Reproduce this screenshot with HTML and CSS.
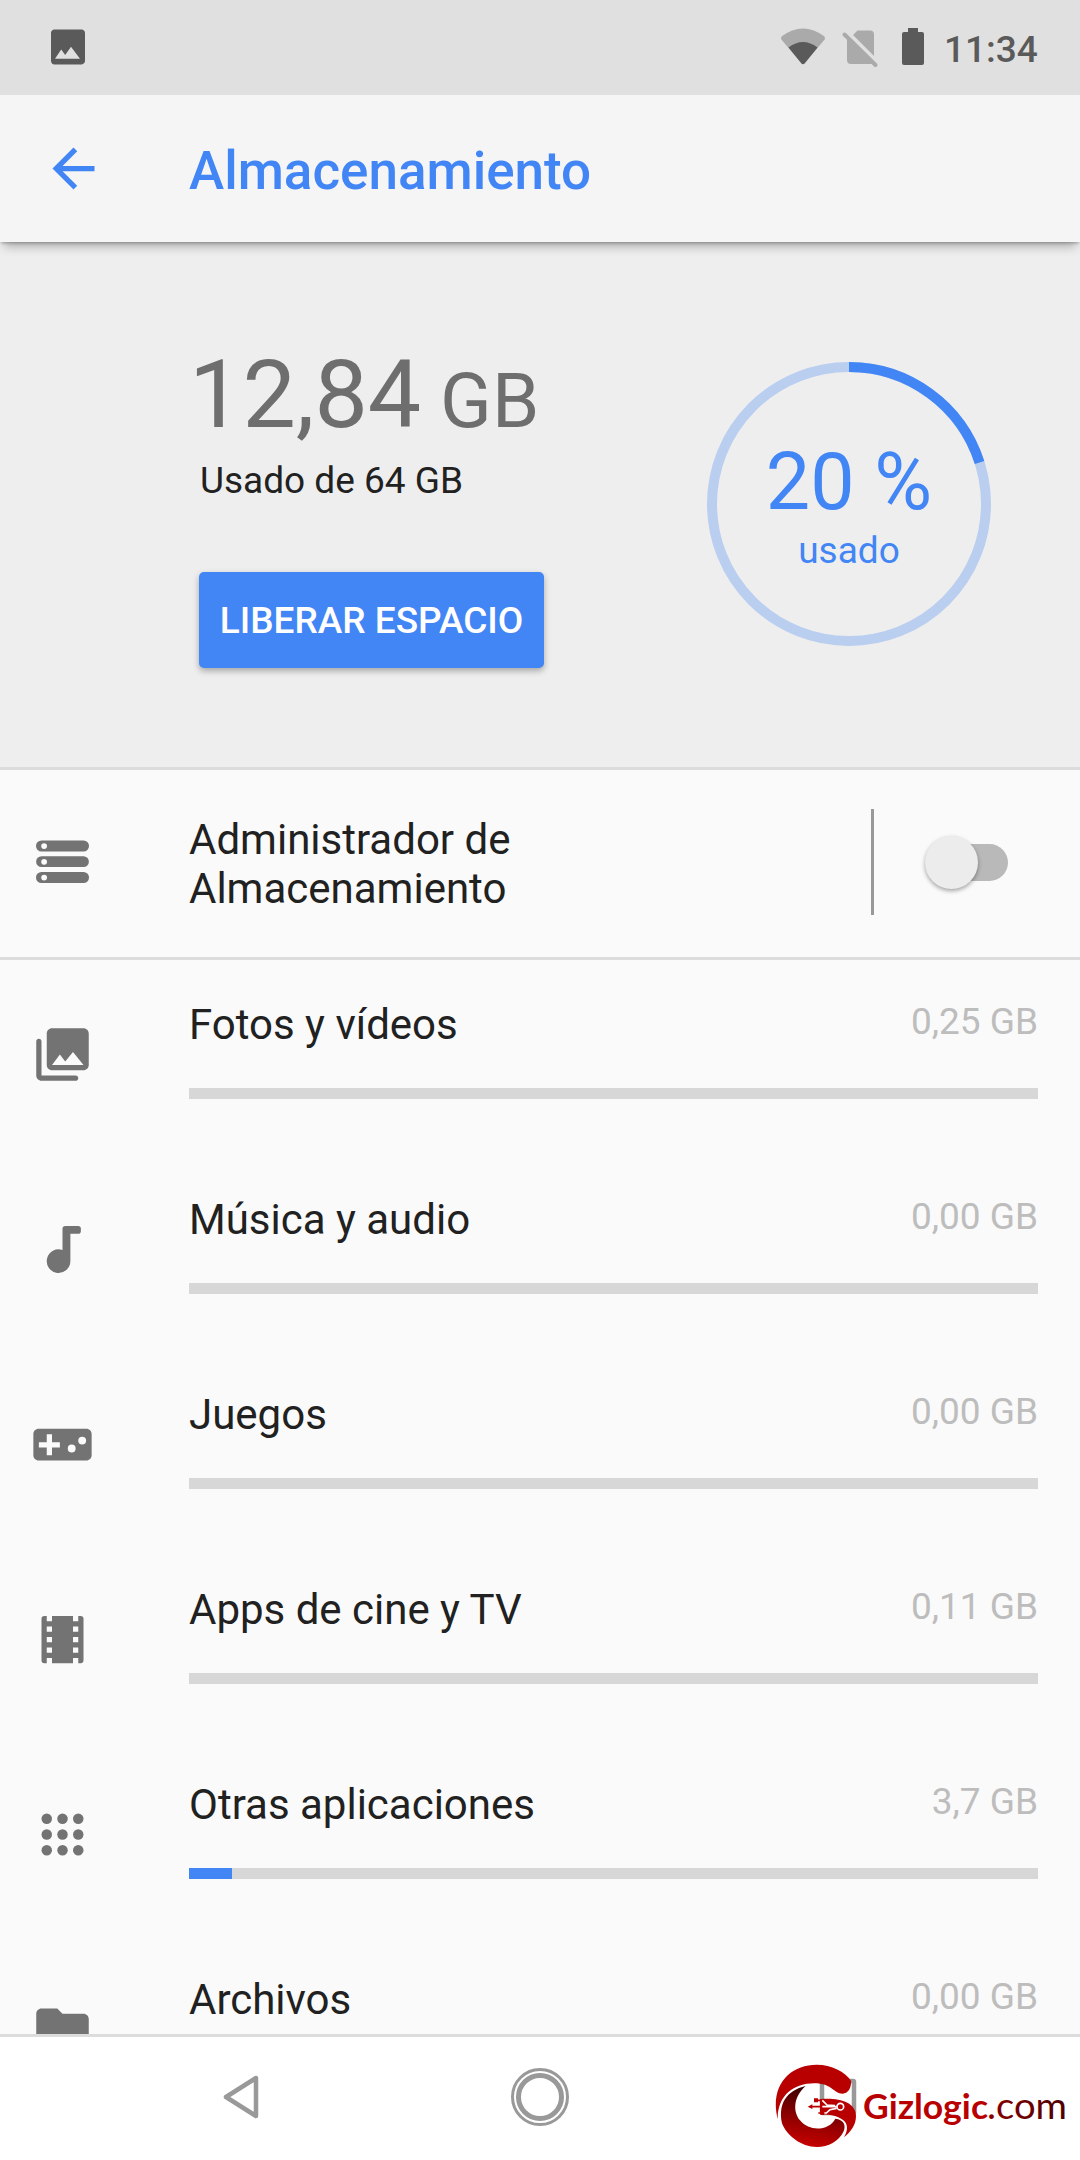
FILE: index.html
```html
<!DOCTYPE html>
<html lang="es">
<head>
<meta charset="utf-8">
<title>Almacenamiento</title>
<link rel="stylesheet" href="styles.css">
</head>
<body>
<div class="screen">
  <header class="status">
    <svg class="status-pic" width="48" height="48" viewBox="0 0 24 24"><path d="M20.500 19V5c0-1-.8-1.700-1.700-1.700H5.200C4.300 3.300 3.500 4 3.500 5v14c0 1 .8 1.700 1.700 1.700h13.600c.9 0 1.700-.8 1.700-1.700zM8.600 13.300l2 2.700 2.900-4.100 4.500 6H5.500z"/></svg>
    <svg class="status-icons" width="150" height="44" viewBox="0 0 150 44">
      <path class="dim" d="M1.500 9.500Q23-6.500 44.500 9.500L45 12 24.500 36.500Q23 38 21.500 36.500L1 12z"/>
      <path d="M8.500 20.500Q23 9.500 37.500 20.500L24.500 36.500Q23 38 21.500 36.500z"/>
      <path class="dim" d="M77.500 3.500H90q4 0 4 4V29L73 8zM67 11.500L92.500 37H71q-4 0-4-4z"/>
      <path class="slash" d="M64.500 7.500L95.500 38"/>
      <path d="M128 1h10v4h4q2 0 2 2v29q0 2-2 2h-18q-2 0-2-2V7q0-2 2-2h4z"/>
    </svg>
    <span class="clock">11:34</span>
  </header>

  <div class="appbar">
    <svg class="back" width="63" height="63" viewBox="0 0 24 24"><path d="M20 11H7.830l5.590-5.590L12 4l-8 8 8 8 1.410-1.410L7.830 13H20v-2z"/></svg>
    <h1>Almacenamiento</h1>
  </div>

  <section class="summary">
    <div class="usage">
      <div class="total">12,84<span class="unit"> GB</span></div>
      <div class="used-of">Usado de 64 GB</div>
      <button class="free">LIBERAR ESPACIO</button>
    </div>
    <div class="donut">
      <svg class="ring" width="284" height="284" viewBox="0 0 284 284">
        <circle class="track" cx="142" cy="142" r="137"/>
        <circle class="value" cx="142" cy="142" r="137" pathLength="1000" stroke-dasharray="201 1000" transform="rotate(-90 142 142)"/>
      </svg>
      <div class="percent">20 %</div>
      <div class="percent-label">usado</div>
    </div>
  </section>

  <section class="manager">
    <svg class="icon" viewBox="0 0 24 24"><path fill-rule="evenodd" d="M4 4h16a2 2 0 0 1 0 4.200H4A2 2 0 0 1 4 4zm1 1a1.100 1.100 0 1 0 0 2.200A1.100 1.100 0 0 0 5 5zM4 10h16a2 2 0 0 1 0 4.100H4A2 2 0 0 1 4 10zm1 1a1.100 1.100 0 1 0 0 2.200A1.100 1.100 0 0 0 5 11zM4 16h16a2 2 0 0 1 0 4.200H4A2 2 0 0 1 4 16zm1 1a1.100 1.100 0 1 0 0 2.200A1.100 1.100 0 0 0 5 17z"/></svg>
    <div class="manager-label">Administrador de<br>Almacenamiento</div>
    <div class="vline"></div>
    <div class="switch"><div class="thumb"></div></div>
  </section>

  <main class="list">
    <div class="row">
      <svg class="icon" viewBox="0 0 24 24"><path d="M22 16V4c0-1.100-.9-2-2-2H8c-1.100 0-2 .9-2 2v12c0 1.100.9 2 2 2h12c1.100 0 2-.9 2-2zM8 16l3-4 2.030 2.710L16 11l4 5z"/><path d="M3 6c.55 0 1 .45 1 1v13h13c.55 0 1 .45 1 1s-.45 1-1 1H4c-1.100 0-2-.9-2-2V7c0-.55.45-1 1-1z"/></svg>
      <div class="body"><div class="line"><span class="name">Fotos y vídeos</span><span class="size">0,25 GB</span></div><div class="bar"></div></div>
    </div>
    <div class="row">
      <svg class="icon" viewBox="0 0 24 24"><path d="M13 3c-.6 0-1 .4-1 1v8.200A4.500 4.500 0 1 0 15 16.500V6h3c.6 0 1-.4 1-1V4c0-.6-.4-1-1-1z"/></svg>
      <div class="body"><div class="line"><span class="name">Música y audio</span><span class="size">0,00 GB</span></div><div class="bar"></div></div>
    </div>
    <div class="row">
      <svg class="icon" viewBox="0 0 24 24"><path fill-rule="evenodd" d="M2.900 6h18.200c1.100 0 2 .9 2 2v8.100c0 1.100-.9 2-2 2H2.900c-1.100 0-2-.9-2-2V8c0-1.100.9-2 2-2zM6 8.100v3H3v2h3v3h2v-3h3v-2H8v-3zM15.500 12a1.500 1.500 0 1 0 0 3 1.500 1.500 0 0 0 0-3zM19.500 9a1.500 1.500 0 1 0 0 3 1.500 1.500 0 0 0 0-3z"/></svg>
      <div class="body"><div class="line"><span class="name">Juegos</span><span class="size">0,00 GB</span></div><div class="bar"></div></div>
    </div>
    <div class="row">
      <svg class="icon" viewBox="0 0 24 24"><path d="M18 3v2h-2V3H8v2H6V3H5c-.6 0-1 .4-1 1v16c0 .6.4 1 1 1h1v-2h2v2h8v-2h2v2h1c.6 0 1-.4 1-1V4c0-.6-.4-1-1-1h-1zM8 17H6v-2h2v2zm0-4H6v-2h2v2zm0-4H6V7h2v2zm10 8h-2v-2h2v2zm0-4h-2v-2h2v2zm0-4h-2V7h2v2z"/></svg>
      <div class="body"><div class="line"><span class="name">Apps de cine y TV</span><span class="size">0,11 GB</span></div><div class="bar"></div></div>
    </div>
    <div class="row">
      <svg class="icon" viewBox="0 0 24 24"><circle cx="6" cy="6" r="2"/><circle cx="12" cy="6" r="2"/><circle cx="18" cy="6" r="2"/><circle cx="6" cy="12" r="2"/><circle cx="12" cy="12" r="2"/><circle cx="18" cy="12" r="2"/><circle cx="6" cy="18" r="2"/><circle cx="12" cy="18" r="2"/><circle cx="18" cy="18" r="2"/></svg>
      <div class="body"><div class="line"><span class="name">Otras aplicaciones</span><span class="size">3,7 GB</span></div><div class="bar"><div class="fill" style="width:43px"></div></div></div>
    </div>
    <div class="row">
      <svg class="icon" viewBox="0 0 24 24"><path d="M10 4H4c-1.100 0-2 .9-2 2v12c0 1.100.9 2 2 2h16c1.100 0 2-.9 2-2V8c0-1.100-.9-2-2-2h-8z"/></svg>
      <div class="body"><div class="line"><span class="name">Archivos</span><span class="size">0,00 GB</span></div><div class="bar"></div></div>
    </div>
  </main>

  <nav class="nav">
    <svg class="nav-back" width="40" height="46" viewBox="0 0 40 46"><path d="M35 4v38L5 23z"/></svg>
    <svg class="nav-home" width="60" height="60" viewBox="0 0 60 60"><circle cx="30" cy="30" r="27.500" stroke-width="3"/><circle cx="30" cy="30" r="21.500" stroke-width="5"/></svg>
    <svg class="nav-recent" width="40" height="40" viewBox="0 0 40 40"><rect x="4" y="4" width="32" height="32" rx="1"/></svg>
  </nav>

  <svg class="watermark" width="310" height="92" viewBox="0 0 310 92">
    <defs>
      <linearGradient id="low" x1=".6" y1="0" x2=".4" y2="1"><stop offset="0" stop-color="#300000"/><stop offset=".55" stop-color="#8c0000"/><stop offset="1" stop-color="#c80000"/></linearGradient>
      <linearGradient id="com" x1="0" y1="0" x2="1" y2="0"><stop offset="0" stop-color="#8a0000"/><stop offset="1" stop-color="#4c0000"/></linearGradient>
    </defs>
    <g transform="scale(.33333)">
      <path fill="#b90000" d="M23 178C-2 75 60 14 140 14C185 14 225 35 243 62C245 82 235 101 218 101C190 101 188 70 132 70C72 70 22 105 23 178z"/>
      <path fill="url(#low)" d="M107 78C70 110 68 155 90 181C120 218 178 211 196 176C220 178 230 195 220 216C206 244 175 261 141 261C92 261 50 226 36 190C24 130 50 92 107 78z"/>
      <path fill="#b90000" d="M150 117C205 112 258 125 258 168C258 195 242 216 222 232C246 190 222 165 150 162z"/>
      <g class="circuit">
        <path stroke="#b90000" d="M122 140h36M140 121h18l8 11M145 159h14"/>
        <path stroke="#fff" d="M157 140h43M157 121l14 14 24 2M158 159h11l11-10 20-4"/>
        <circle stroke="#fff" cx="211" cy="140" r="10"/>
      </g>
      <path fill="#b90000" d="M113 140l14-7v14zM132 115h12v12h-12zM151 153h12v12h-12z"/>
    </g>
    <text class="giz" x="93" y="59" textLength="125" lengthAdjust="spacingAndGlyphs">Gizlogic</text>
    <text class="com" x="217" y="59" textLength="80" lengthAdjust="spacingAndGlyphs" fill="url(#com)">.com</text>
  </svg>
</div>
</body>
</html>
```
FILE: styles.css
```css
* { box-sizing: border-box; }
body { margin: 0; font-family: Roboto, sans-serif; color: #212121; }
.screen { position: relative; display: flex; flex-direction: column; width: 1080px; height: 2160px; overflow: hidden; background: #fafafa; }

.status { display: flex; align-items: flex-start; flex: none; height: 95px; background: #e0e0e0; fill: #5a5a5a; }
.status-pic { margin: 23px 0 0 44px; }
.status-icons { margin: 27px 0 0 688px; }
.status-icons .dim { fill: #aaa; }
.status-icons .slash { stroke: #aaa; stroke-width: 4; stroke-linecap: round; }
.clock { margin: 28px 0 0 14px; font-size: 37px; line-height: 44px; font-weight: 500; color: #5a5a5a; white-space: nowrap; }

.appbar { position: relative; z-index: 1; display: flex; align-items: center; flex: none; height: 147px; background: #f5f5f5; box-shadow: 0 8px 10px -4px rgba(0, 0, 0, .3), 0 2px 3px -1px rgba(0, 0, 0, .25); }
.back { margin-left: 42px; fill: #4285f4; }
.appbar h1 { margin: 4px 0 0 84px; font-size: 53px; line-height: 62px; font-weight: 500; color: #4285f4; }

.summary { display: flex; flex: none; justify-content: space-between; height: 528px; padding: 0 89px 0 189px; background: #eee; border-bottom: 3px solid #dcdcdc; }
.usage { display: flex; flex-direction: column; align-items: flex-start; padding-top: 98px; }
.total { height: 110px; font-size: 95px; line-height: 110px; color: #6e6e6e; white-space: nowrap; }
.unit { font-size: 76px; }
.used-of { margin: 9px 0 0 11px; font-size: 37px; line-height: 44px; }
.free { width: 345px; height: 96px; margin: 69px 0 0 10px; padding: 2px 0 0; border: 0; border-radius: 5px; background: #4285f4; color: #fff; font: 500 37px/44px Roboto, sans-serif; white-space: nowrap; box-shadow: 0 3px 6px rgba(0, 0, 0, .3); }
.donut { position: relative; display: flex; flex-direction: column; align-items: center; width: 284px; height: 284px; margin-top: 120px; padding-top: 74px; color: #4285f4; }
.ring { position: absolute; left: 0; top: 0; fill: none; stroke-width: 10; }
.track { stroke: #bacef0; }
.value { stroke: #4285f4; }
.percent { font-size: 79px; line-height: 92px; }
.percent-label { margin-top: 1px; font-size: 37px; line-height: 44px; }

.icon { width: 63px; height: 63px; flex: none; fill: #737373; }
.manager { display: flex; flex: none; align-items: center; height: 190px; padding-left: 31px; border-bottom: 3px solid #dcdcdc; }
.manager .icon { margin-top: -4px; }
.manager-label { width: 682px; margin-left: 95px; font-size: 42px; line-height: 49px; }
.vline { width: 3px; height: 106px; margin-top: -4px; background: #999; }
.switch { display: flex; align-items: center; width: 75px; height: 37px; margin: -2px 0 0 59px; border-radius: 19px; background: #b9b9b9; }
.thumb { flex: none; width: 53px; height: 53px; margin-left: -8px; border-radius: 50%; background: #ececec; box-shadow: 0 2px 4px rgba(0, 0, 0, .35); }

.list { flex: 1; min-height: 0; overflow: hidden; }
.row { display: flex; height: 195px; padding: 0 42px 0 31px; }
.row .icon { margin-top: 63px; }
.body { flex: 1; margin-left: 95px; padding-top: 40px; }
.line { display: flex; justify-content: space-between; height: 88px; }
.name { font-size: 42px; line-height: 50px; }
.size { font-size: 37px; line-height: 44px; color: #bdbdbd; }
.bar { height: 11px; background: #d7d7d7; }
.fill { height: 11px; background: #4285f4; }

.nav { display: flex; flex: none; align-items: center; height: 126px; padding: 0 0 4px 221px; background: #fff; border-top: 3px solid #dcdcdc; fill: none; stroke: #999; stroke-linejoin: round; }
.nav-back { stroke-width: 4.500; }
.nav-home { margin-left: 249px; }
.nav-recent { margin-left: 248px; stroke-width: 4.500; }
.watermark { position: absolute; left: 770px; top: 2060px; }
.circuit { fill: none; stroke-width: 5; }
.giz { font: 700 35px Lato, sans-serif; fill: #b90000; }
.com { font: 400 37px Lato, sans-serif; }
```
